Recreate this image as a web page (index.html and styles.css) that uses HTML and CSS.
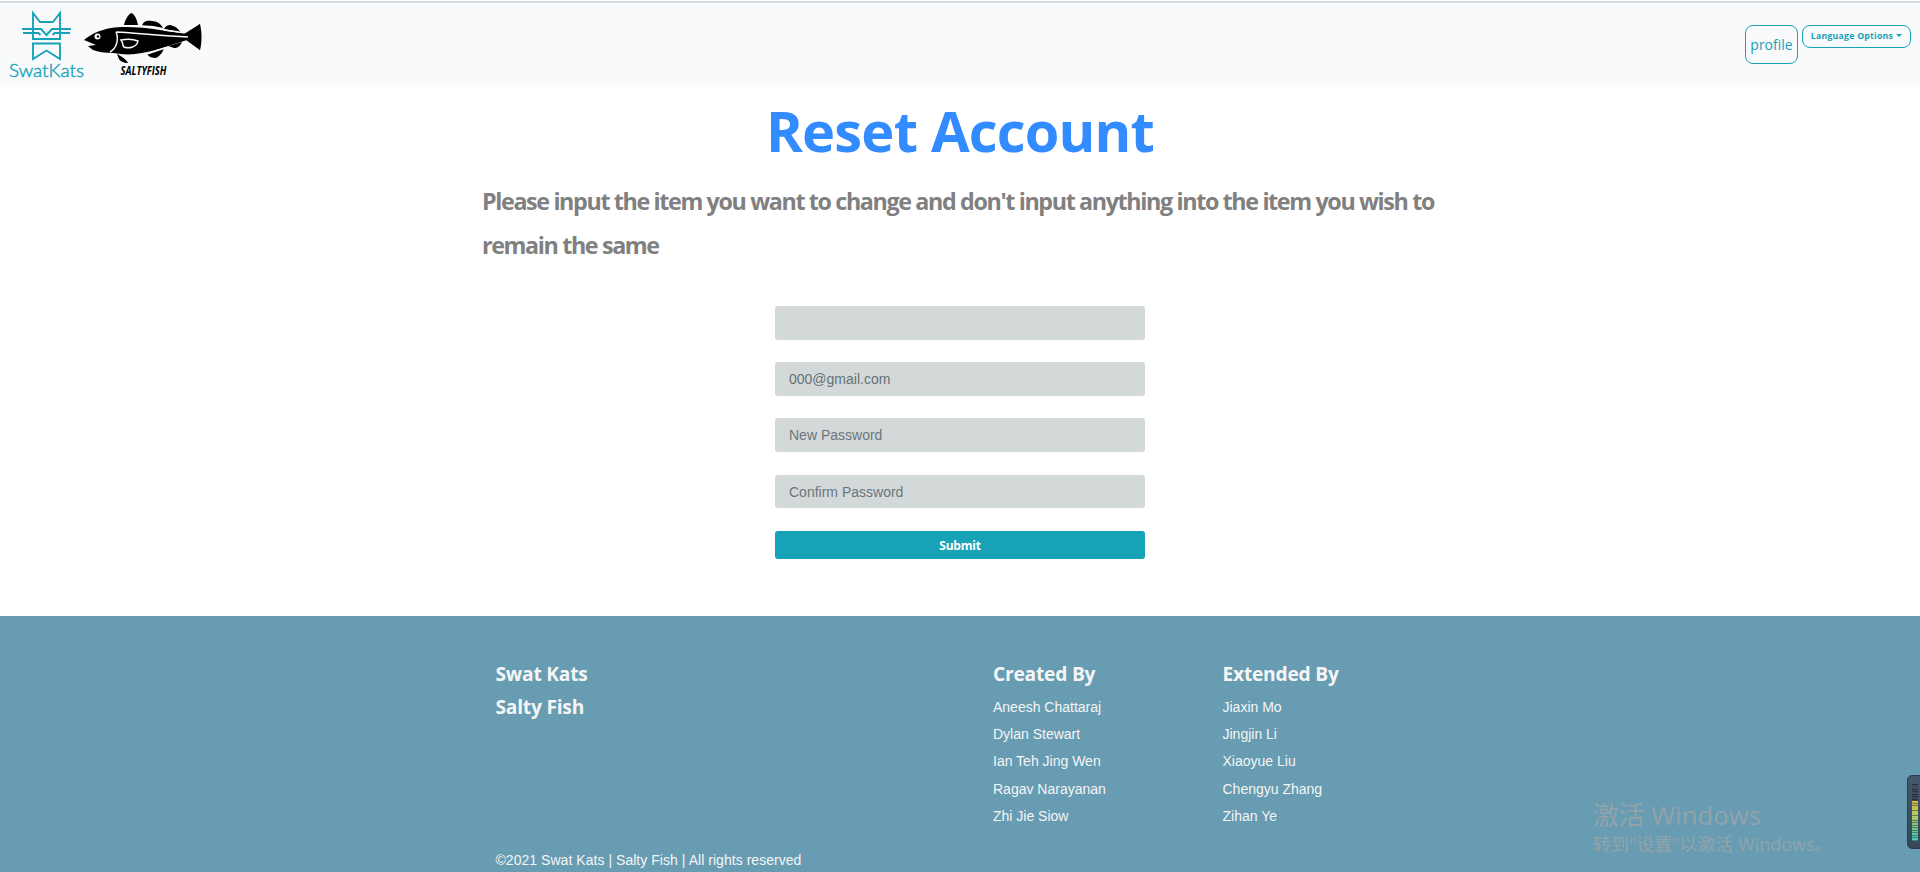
FILE: index.html
```html
<!DOCTYPE html>
<html lang="en">
<head>
<meta charset="utf-8">
<title>Reset Account</title>
<link rel="stylesheet" href="styles.css">
</head>
<body>
<header class="navbar">
  <div class="brand">
    <svg class="logo-cat" width="78" height="72" viewBox="0 0 78 72">
      <g fill="none" stroke="#17a2b8" stroke-width="1.9">
        <path d="M25 31V5l7 9h13l7-9v26"/>
        <path d="M24 31h29M14 21h19l5.500 6 5.500-6h19M15 25h15.500l2 2.200M62 25H46.500l-2 2.200"/>
        <path d="M25 35.500h27v15.500l-13.500-8.500L25 51z"/>
      </g>
      <text class="cat-name" x="1" y="69" textLength="75" lengthAdjust="spacingAndGlyphs">SwatKats</text>
    </svg>
    <svg class="logo-fish" width="120" height="72" viewBox="84 8 120 72">
      <path d="M84 40c7-6 16-10 27-12 5-1 9-1 14-1 12 0 24 1 35 3 9 1 18 3 27 4l13-10c2 8 2 19 0 26l-13-10c-8 3-17 5-25 8-9 3-18 5-27 6-8 1-15 0-22-1-8 0-15-1-20-3l-5-4 8-1z"/>
      <path d="M124 25c1-5 4-10 7-12 4 1 6 7 7 12zM142 26c1-5 5-6 10-5 5 0 9 3 11 7zM164 29c2-4 6-5 9-3 4 1 6 4 7 6zM147 54l17-6c-1 4-4 8-8 10-4 0-7-1-9-4zM168 46l14-4c-2 4-4 6-8 6zM117 54c4 2 9 5 11 9-4 0-8-2-9-4zM184 34l16-10v26l-14-10z"/>
      <g fill="none" stroke="#f8fafb" stroke-width="1.500">
        <path d="M116 32c22 1 46 4 72 5M116 32c3 7 1 16-6 20M121 40c6-1 12-1 17 1-1 6-9 8-14 6-2-1 0-3-3-7z"/>
        <path d="M142 26c8 0 15 1 22 3M164 30l15 2M147 54l18-6"/>
      </g>
      <circle cx="97.500" cy="36.500" r="3" fill="#f8fafb"/><circle cx="98" cy="36.500" r="1.200"/>
      <text class="fish-name" x="120.500" y="75" textLength="46" lengthAdjust="spacingAndGlyphs">SALTYFISH</text>
    </svg>
  </div>
  <nav class="actions">
    <a class="profile">profile</a>
    <button class="language">Language Options<span class="caret"></span></button>
  </nav>
</header>
<main class="content">
  <h1 class="title">Reset Account</h1>
  <p class="hint">Please input the item you want to change and don't input anything into the item you wish to remain the same</p>
  <form class="form">
    <input class="field" type="text">
    <input class="field field-email" type="text" placeholder="000@gmail.com">
    <input class="field" type="password" placeholder="New Password">
    <input class="field" type="password" placeholder="Confirm Password">
    <button class="submit" type="button">Submit</button>
  </form>
</main>
<footer class="footer">
  <div class="footer-columns">
    <section>
      <h2 class="heading">Swat Kats</h2>
      <h2 class="heading">Salty Fish</h2>
    </section>
    <section>
      <h2 class="heading">Created By</h2>
      <ul class="names"><li>Aneesh Chattaraj</li><li>Dylan Stewart</li><li>Ian Teh Jing Wen</li><li>Ragav Narayanan</li><li>Zhi Jie Siow</li></ul>
    </section>
    <section>
      <h2 class="heading">Extended By</h2>
      <ul class="names"><li>Jiaxin Mo</li><li>Jingjin Li</li><li>Xiaoyue Liu</li><li>Chengyu Zhang</li><li>Zihan Ye</li></ul>
    </section>
  </div>
  <p class="copyright">©2021 Swat Kats | Salty Fish | All rights reserved</p>
</footer>
<aside class="activation" lang="zh-CN">
  <div class="activation-title">激活 Windows</div>
  <div class="activation-text">转到"设置"以激活 Windows。</div>
</aside>
<div class="meter"><div class="meter-off"></div><div class="meter-on"></div></div>
</body>
</html>
```

FILE: styles.css
```css
* { box-sizing: border-box; }
body {
  margin: 0;
  height: 872px;
  overflow: hidden;
  position: relative;
  display: flex;
  flex-direction: column;
  background: #fff;
  font-family: "Liberation Sans", Arial, sans-serif;
  font-size: 14px;
}
h1, h2, p, ul { margin: 0; padding: 0; font-weight: inherit; }
.navbar {
  flex: none;
  height: 86px;
  margin-top: 1px;
  border-top: 2px solid #d7dcde;
  background: #f8fafb;
  display: flex;
  justify-content: space-between;
  padding: 5px 9px 0 8px;
}
.brand { display: flex; }
.logo-fish { margin-left: -2px; }
.cat-name { font: 300 17px Lato, sans-serif; fill: #17a2b8; stroke: #17a2b8; stroke-width: .4px; }
.fish-name { font: italic bold 12.500px "Open Sans", sans-serif; fill: #000; }
.actions { display: flex; gap: 4px; align-items: flex-start; padding-top: 17px; }
.profile, .language {
  border: 1px solid #17a2b8;
  border-radius: 8px;
  color: #17a2b8;
  font-family: "Open Sans", sans-serif;
  background: transparent;
}
.profile { width: 53px; height: 39px; line-height: 37px; font-size: 14px; text-align: center; }
.language {
  width: 109px; height: 23px; padding: 0 0 2px;
  font-size: 8.750px; font-weight: 700; letter-spacing: .22px;
  display: flex; align-items: center; justify-content: center;
}
.caret { margin-left: 3px; border: 3px solid transparent; border-top-color: #17a2b8; border-bottom: 0; }
.content { flex: none; height: 529px; width: 960px; margin: 0 auto; padding-top: 7px; }
.title {
  font: 700 56px/72px "Open Sans", sans-serif;
  letter-spacing: -.8px;
  color: #338cff;
  text-align: center;
}
.hint {
  margin-top: 13px;
  padding: 0 2px;
  font: 700 23.300px/44px "Open Sans", sans-serif;
  letter-spacing: -1.370px;
  color: #808080;
}
.form { width: 370px; margin: 38.900px auto 0; display: flex; flex-direction: column; gap: 22.500px; }
.field {
  height: 33.750px;
  padding: 0 14px;
  border: 0;
  border-radius: 3px;
  background: #d3d9d9;
  font: 14px "Liberation Sans", Arial, sans-serif;
}
.field::placeholder { color: #6c757d; }
.field-email::placeholder { color: #667174; }
.submit {
  height: 28px;
  padding: 1px 0 0;
  border: 0;
  border-radius: 3px;
  background: #18a2b8;
  color: #fff;
  font: 700 12px "Open Sans", sans-serif;
  letter-spacing: -.2px;
}
.footer { flex: none; height: 256px; background: #679cb2; color: #f5f5f5; padding: 41px 0 0 495.500px; overflow: hidden; }
.footer-columns { display: grid; grid-template-columns: 497.500px 229.500px 200px; height: 189px; }
.heading { font: 700 19.200px/33px "Open Sans", sans-serif; letter-spacing: -.22px; }
.names { list-style: none; padding-top: 4px; line-height: 27.200px; }
.copyright { line-height: 28px; letter-spacing: .04px; }
.activation {
  position: absolute;
  left: 1593px;
  top: 798px;
  color: #93a3aa;
  font-family: "Open Sans", "Noto Sans CJK SC", sans-serif;
  white-space: nowrap;
}
.activation-title { font-size: 25.800px; line-height: 34px; }
.activation-text { font-size: 18px; line-height: 24px; }
.meter {
  position: absolute;
  left: 1907px;
  top: 775px;
  width: 15px;
  height: 74px;
  padding: 8px 4px 0;
  border: 1px solid #2c3c4d;
  border-radius: 5px 0 0 5px;
  background: linear-gradient(#45576b, #36475a);
}
.meter-off, .meter-on { width: 6px; }
.meter-off { height: 17px; background: repeating-linear-gradient(#26313f 0 1px, #3c4b5d 1px 2.500px); }
.meter-on {
  height: 40px;
  background: repeating-linear-gradient(transparent 0 1.500px, #34485b99 1.500px 2.500px), linear-gradient(#d8b840, #b5cc60 35%, #7cc47c 65%, #3fd0c0);
}
```
